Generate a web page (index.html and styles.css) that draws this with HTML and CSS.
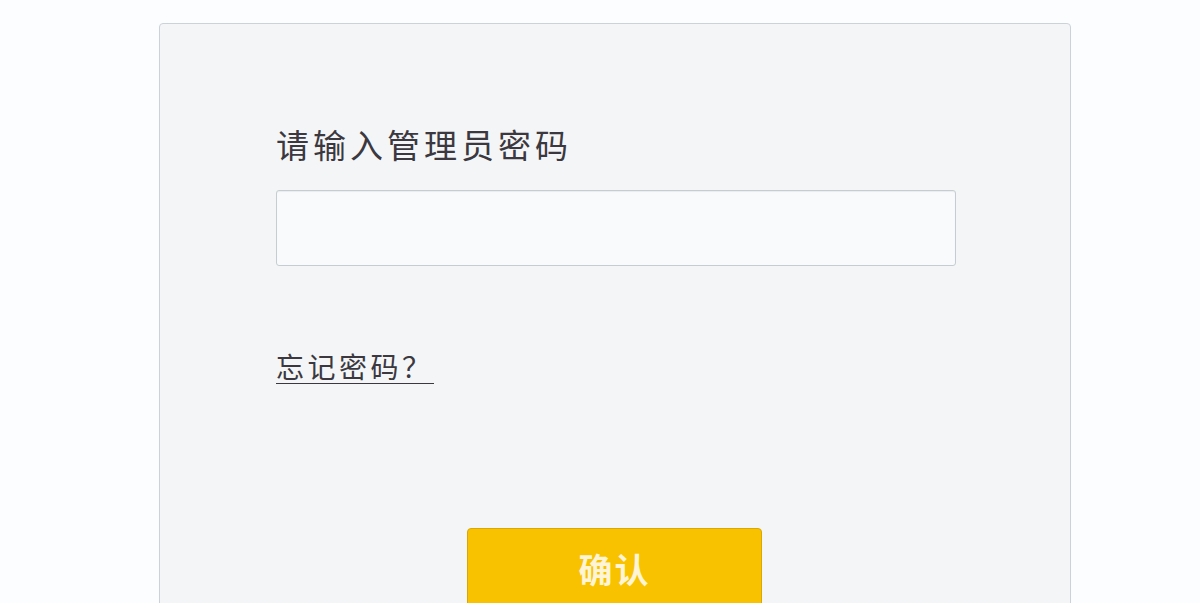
FILE: index.html
```html
<!DOCTYPE html>
<html lang="zh-CN">
<head>
<meta charset="utf-8">
<title>管理员登录</title>
<link rel="stylesheet" href="styles.css">
</head>
<body>
<div class="page">
  <div class="card">
    <h1 class="title">请输入管理员密码</h1>
    <input class="pwd" type="password" aria-label="管理员密码">
    <div class="forgot-row"><a class="forgot" href="#">忘记密码？</a></div>
    <div class="actions"><button class="confirm" type="button">确认</button></div>
  </div>
</div>
</body>
</html>
```
FILE: styles.css
```css
html, body {
  margin: 0;
  padding: 0;
  height: 100%;
  overflow: hidden;
}
body {
  background: #fcfdfe;
  font-family: "Noto Sans CJK SC", "Noto Sans", sans-serif;
  color: #3b3840;
}
.page {
  padding: 23px 0 0 159px;
}
.card {
  box-sizing: border-box;
  width: 912px;
  height: 640px;
  background: #f4f5f7;
  border: 1px solid #cdd2d9;
  border-radius: 4px;
  padding: 99px 116px 0 116px;
  display: flex;
  flex-direction: column;
}
.title {
  margin: 0;
  font-size: 33px;
  line-height: 42px;
  font-weight: 400;
  letter-spacing: 4px;
  color: #3b3840;
}
.pwd {
  box-sizing: border-box;
  margin: 25px 0 0 0;
  width: 680px;
  height: 76px;
  background: #f9fafb;
  border: 1px solid #c7ccd2;
  border-radius: 3px;
  box-shadow: inset 0 1px 1px rgba(0, 0, 0, 0.06);
  outline: none;
}
.forgot-row {
  margin-top: 83px;
  display: flex;
}
.forgot {
  font-size: 28px;
  line-height: 34px;
  letter-spacing: 3.5px;
  color: #3b3840;
  text-decoration: none;
  border-bottom: 1px solid #3b3840;
}
.actions {
  margin-top: 144px;
  display: flex;
  padding-left: 191px;
}
.confirm {
  box-sizing: border-box;
  width: 295px;
  height: 80px;
  background: #f8c200;
  border: 1px solid #dca700;
  border-radius: 4px;
  color: #fff5d6;
  font-family: "Noto Sans CJK SC", sans-serif;
  font-size: 34px;
  font-weight: 700;
  letter-spacing: 2px;
  padding: 0;
}
```
